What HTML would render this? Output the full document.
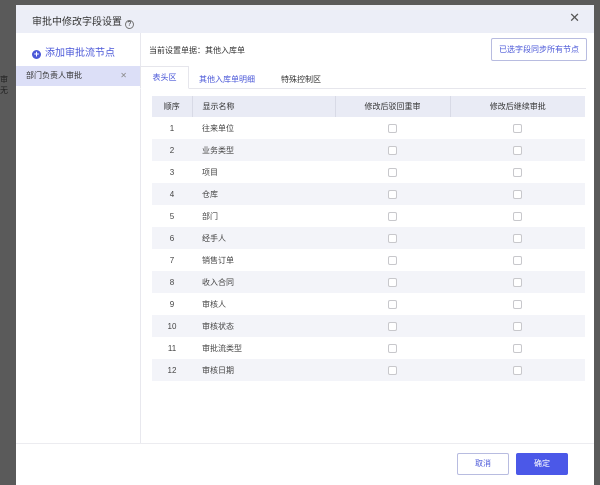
<!DOCTYPE html>
<html><head><meta charset="utf-8"><style>
*{margin:0;padding:0;box-sizing:border-box}
body{width:600px;height:485px;background:#5a5a5a;position:relative;overflow:hidden;font-family:"Liberation Sans","Noto Sans CJK SC",sans-serif;font-size:8px;color:#333}
.bgtxt{position:absolute;left:0;color:#222;font-size:8px}
.dlg{position:absolute;left:16px;top:5px;width:578px;height:480px;background:#fff}
.hd{position:absolute;left:0;top:0;width:578px;height:28px;background:#eceef7;}
.hd .t{position:absolute;left:16px;top:8px;font-size:10px;color:#333}
.hd .x{position:absolute;right:14px;top:5px;font-size:13px;color:#555}
.left{position:absolute;left:0;top:28px;width:125px;height:410px;border-right:1px solid #e8e8ee}
.add{position:absolute;left:16px;top:11px;font-size:10px;color:#4b58d8}
.add i{display:inline-block;width:9px;height:9px;border-radius:50%;background:#4b58d8;color:#fff;font-style:normal;font-size:9px;line-height:9px;text-align:center;vertical-align:-1px;margin-right:4px;font-weight:bold}
.sel{position:absolute;left:0;top:33px;width:124px;height:20px;background:#dcdff7;font-size:8px;line-height:20px;padding-left:10px;color:#333}
.sel span{position:absolute;right:13px;color:#888}
.cur{position:absolute;left:133px;top:40px;font-size:8px}
.sync{position:absolute;left:475px;top:33px;width:96px;height:23px;border:1px solid #b8bce0;border-radius:2px;color:#4b58d8;font-size:8px;line-height:21px;text-align:center}
.tabline{position:absolute;left:125px;top:83px;width:445px;border-top:1px solid #e6e6ec}
.tab{position:absolute;top:66px;height:18px;font-size:8px;line-height:18px}
.tab.a{left:124px;width:49px;top:61px;height:23px;border:1px solid #e6e6ec;border-bottom:1px solid #fff;background:#fff;line-height:21px;text-align:center;color:#4b58d8}
table{position:absolute;left:136px;top:91px;width:433px;border-collapse:collapse}
th{height:21px;background:#e9ebf5;font-weight:normal;font-size:8px;color:#333;border-right:1px solid #d8dae6}
th:last-child{border-right:none}
td{height:22px;font-size:8px;color:#444}
tr:nth-child(odd) td{background:#f3f4f9}
.c{text-align:center}
.n{padding-left:10px}
.cb{display:inline-block;width:9px;height:9px;border:1px solid #c8c8cc;border-radius:2px;background:#fff;vertical-align:middle}
.ft{position:absolute;left:0;top:438px;width:578px;border-top:1px solid #ececf0}
.btn{position:absolute;top:448px;width:52px;height:22px;border-radius:2px;font-size:8px;line-height:20px;text-align:center}
</style></head><body>
<div class="bgtxt" style="top:74px">审</div>
<div class="bgtxt" style="top:85px">无</div>
<div class="dlg">
<div class="hd"><div class="t">审批中修改字段设置 <span style="border:1px solid #777;border-radius:50%;display:inline-block;width:9px;height:9px;line-height:7px;text-align:center;font-size:7px;vertical-align:-1px">?</span></div><div class="x">✕</div></div>
<div class="left"><div class="add"><i>+</i>添加审批流节点</div><div class="sel">部门负责人审批<span>✕</span></div></div>
<div class="cur">当前设置单据：其他入库单</div>
<div class="sync">已选字段同步所有节点</div>
<div class="tabline"></div>
<div class="tab a">表头区</div>
<div class="tab" style="left:183px;color:#4b58d8">其他入库单明细</div>
<div class="tab" style="left:265px">特殊控制区</div>
<table>
<tr><th style="width:40px">顺序</th><th style="width:143px;text-align:left;padding-left:10px">显示名称</th><th style="width:115px">修改后驳回重审</th><th>修改后继续审批</th></tr>
<tr><td class="c">1</td><td class="n">往来单位</td><td class="c"><span class="cb"></span></td><td class="c"><span class="cb"></span></td></tr>
<tr><td class="c">2</td><td class="n">业务类型</td><td class="c"><span class="cb"></span></td><td class="c"><span class="cb"></span></td></tr>
<tr><td class="c">3</td><td class="n">项目</td><td class="c"><span class="cb"></span></td><td class="c"><span class="cb"></span></td></tr>
<tr><td class="c">4</td><td class="n">仓库</td><td class="c"><span class="cb"></span></td><td class="c"><span class="cb"></span></td></tr>
<tr><td class="c">5</td><td class="n">部门</td><td class="c"><span class="cb"></span></td><td class="c"><span class="cb"></span></td></tr>
<tr><td class="c">6</td><td class="n">经手人</td><td class="c"><span class="cb"></span></td><td class="c"><span class="cb"></span></td></tr>
<tr><td class="c">7</td><td class="n">销售订单</td><td class="c"><span class="cb"></span></td><td class="c"><span class="cb"></span></td></tr>
<tr><td class="c">8</td><td class="n">收入合同</td><td class="c"><span class="cb"></span></td><td class="c"><span class="cb"></span></td></tr>
<tr><td class="c">9</td><td class="n">审核人</td><td class="c"><span class="cb"></span></td><td class="c"><span class="cb"></span></td></tr>
<tr><td class="c">10</td><td class="n">审核状态</td><td class="c"><span class="cb"></span></td><td class="c"><span class="cb"></span></td></tr>
<tr><td class="c">11</td><td class="n">审批流类型</td><td class="c"><span class="cb"></span></td><td class="c"><span class="cb"></span></td></tr>
<tr><td class="c">12</td><td class="n">审核日期</td><td class="c"><span class="cb"></span></td><td class="c"><span class="cb"></span></td></tr>
</table>
<div class="ft"></div>
<div class="btn" style="left:441px;border:1px solid #b8bce0;color:#4b58d8">取消</div>
<div class="btn" style="left:500px;background:#4b58e8;color:#fff;border:1px solid #4b58e8">确定</div>
</div>
</body></html>
